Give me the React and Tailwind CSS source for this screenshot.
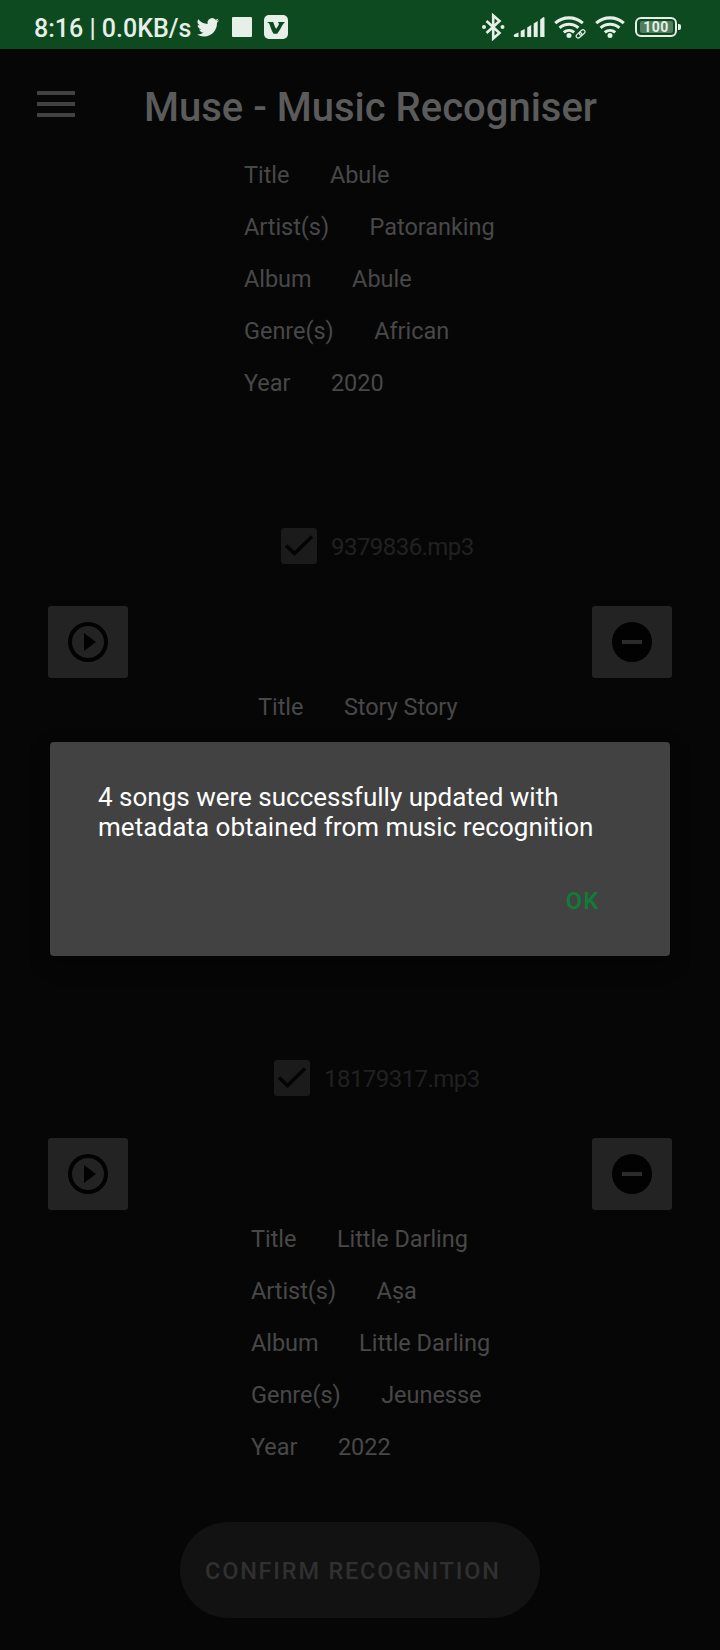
import React from "react";

const SONGS = [
  {
    id: "abule",
    infoClass: "pl-[244px]",
    rows: [
      ["Title", "Abule"],
      ["Artist(s)", "Patoranking"],
      ["Album", "Abule"],
      ["Genre(s)", "African"],
      ["Year", "2020"],
    ],
  },
  {
    id: "story",
    file: "9379836.mp3",
    fileClass: "pl-[281px]",
    infoClass: "pl-[258px]",
    rows: [["Title", "Story Story"]],
  },
  {
    id: "darling",
    file: "18179317.mp3",
    fileClass: "pl-[274px]",
    infoClass: "pl-[251px]",
    rows: [
      ["Title", "Little Darling"],
      ["Artist(s)", "Aṣa"],
      ["Album", "Little Darling"],
      ["Genre(s)", "Jeunesse"],
      ["Year", "2022"],
    ],
  },
];

function Wifi({ linked }) {
  return (
    <svg className="h-6 w-8 shrink-0" viewBox="0 0 32 24" fill="none" stroke="#e6efe8" strokeWidth="3.1">
      <path d="M1.2 8.2a20.5 20.5 0 0 1 27.6 0" />
      <path d="M5.6 12.9a14 14 0 0 1 18.8 0" />
      <path d="M9.8 17.400a8 8 0 0 1 10.400 0" />
      <circle cx="15" cy="20.600" r="2.500" fill="#e6efe8" stroke="none" />
      {linked && (
        <g>
          <circle cx="26.500" cy="19" r="5.800" fill="#0d4a20" stroke="none" />
          <g strokeWidth="1.200" transform="rotate(-42 26.500 19)">
            <rect x="21.400" y="17" width="6.200" height="4" rx="2" />
            <rect x="25.600" y="17" width="6.200" height="4" rx="2" />
          </g>
        </g>
      )}
    </svg>
  );
}

function StatusBar() {
  return (
    <div className="flex h-[49px] items-center bg-[#0d4a20] pl-[34px] pt-[5px] text-[#e6efe8]">
      <span className="w-[162px] whitespace-nowrap pt-[4px] text-[25px] font-medium leading-[30px]">8:16 | 0.0KB/s</span>
      <svg className="h-6 w-6 shrink-0" viewBox="0 0 24 24" fill="#e6efe8">
        <path d="M23.6 4.9a9.6 9.6 0 0 1-2.8.8 4.9 4.9 0 0 0 2.2-2.7c-1 .6-2 1-3.1 1.2a4.9 4.9 0 0 0-8.4 4.5A14 14 0 0 1 1.4 3.6a4.9 4.9 0 0 0 1.5 6.6 4.9 4.9 0 0 1-2.2-.6v.1a4.9 4.9 0 0 0 3.9 4.8 4.9 4.9 0 0 1-2.2.1 4.9 4.9 0 0 0 4.6 3.4A9.9 9.9 0 0 1 0 20a13.9 13.9 0 0 0 7.5 2.2c9.1 0 14-7.5 14-14v-.6a10 10 0 0 0 2.1-2.7z" transform="translate(1 .8) scale(.93)" />
      </svg>
      <span className="ml-3 h-5 w-5 rounded-[1px] bg-[#e6efe8]" />
      <svg className="ml-3 h-6 w-6 shrink-0" viewBox="0 0 24 24">
        <rect width="24" height="24" rx="5" fill="#e6efe8" />
        <path d="M3 7h6.200c.8 2.600 1.600 4.700 2.900 6.700 1.500-1.800 2.500-3.300 2.900-4.700L14 7h7c-1.800 1.600-2.700 3.200-3.900 5.600-1.100 2.300-2.500 4.500-3.900 6.100h-3.600C7.600 16 6.600 12.400 5.200 8.600z" fill="#0d4a20" />
      </svg>
      <svg className="ml-[193px] h-7 w-6 shrink-0" viewBox="0 0 24 28" fill="none" stroke="#e6efe8" strokeWidth="2.600">
        <path d="M5.500 8 18.500 20 12.200 25.500V2.500L18.500 8 5.500 20" />
        <circle cx="3" cy="14" r="2" fill="#e6efe8" stroke="none" />
        <circle cx="21.500" cy="14" r="2" fill="#e6efe8" stroke="none" />
      </svg>
      <svg className="ml-2 h-5 w-8 shrink-0" viewBox="0 0 32 20" fill="#e6efe8">
        <path d="M.8 18 2 17l3.500-1.500V20H1.800a1 1 0 0 1-1-1z" />
        <path d="M7.700 14l4-2v8h-4z" />
        <path d="M14.200 10.500l4-2.500v12h-4z" />
        <path d="M20.700 6.500l4-2.500v16h-4z" />
        <path d="M27.200 2.500l3-2.200a.8.8 0 0 1 1.300.7v19h-4.300z" />
      </svg>
      <span className="ml-[9px] flex"><Wifi linked /></span>
      <span className="ml-[9px] flex"><Wifi /></span>
      <span className="ml-2 flex h-5 w-[42px] items-center justify-center rounded-[6px] border-2 border-[#e6efe8]">
        <span className="flex h-3 w-[33px] items-center justify-center rounded-[2px] bg-[#4f7d5d] text-[14px] font-bold leading-3 tracking-[0.5px]">100</span>
      </span>
      <span className="ml-px h-[6px] w-[3px] rounded-r-[2px] bg-[#e6efe8]" />
    </div>
  );
}

function Header() {
  return (
    <header className="flex h-[100px] items-start pl-[37px]">
      <div className="mt-[42px] flex w-[38px] flex-col gap-[7px]">
        <span className="h-1 bg-[#424242]" />
        <span className="h-1 bg-[#424242]" />
        <span className="h-1 bg-[#424242]" />
      </div>
      <h1 className="ml-[69px] mt-[35px] whitespace-nowrap text-[40px] font-medium leading-[48px] text-[#5b5b5b]">
        Muse - Music Recogniser
      </h1>
    </header>
  );
}

function SongControls({ song }) {
  return (
    <>
      <label className={`flex h-9 items-center ${song.fileClass}`}>
        <span className="flex h-9 w-9 items-center justify-center rounded-[3px] bg-[#1b1b1b]">
          <svg className="h-9 w-9" viewBox="0 0 36 36" fill="none" stroke="#040404" strokeWidth="3.500">
            <path d="M5 17.500 13.500 25.500 31 8.500" />
          </svg>
        </span>
        <span className="ml-[14px] pt-[2px] text-[24px] leading-[34px] tracking-[-0.55px] text-[#212121]">{song.file}</span>
      </label>
      <div className="mt-[42px] flex h-[72px] justify-between px-12">
        <button className="flex w-20 items-center justify-center rounded-[3px] bg-[#232323]">
          <svg className="h-12 w-12" viewBox="0 0 24 24" fill="#020202">
            <path d="M12 2a10 10 0 1 0 0 20 10 10 0 0 0 0-20zm0 18a8 8 0 1 1 0-16 8 8 0 0 1 0 16z" />
            <path d="m10 16.500 6-4.500-6-4.500z" />
          </svg>
        </button>
        <button className="flex w-20 items-center justify-center rounded-[3px] bg-[#232323]">
          <svg className="h-12 w-12" viewBox="0 0 24 24">
            <circle cx="12" cy="12" r="10" fill="#020202" />
            <path d="M7 11h10v2H7z" fill="#2b2b2b" />
          </svg>
        </button>
      </div>
      <div className="h-[3px]" />
    </>
  );
}

function SongInfo({ song }) {
  return (
    <dl className={`h-[260px] text-[23.5px] leading-[52px] tracking-[-0.04px] text-[#484848] ${song.infoClass}`}>
      {song.rows.map(([label, value]) => (
        <div key={label} className="flex h-[52px] gap-[40.5px]">
          <dt>{label}</dt>
          <dd>{value}</dd>
        </div>
      ))}
    </dl>
  );
}

function Dialog() {
  return (
    <div className="absolute left-[50px] top-[742px] flex h-[214px] w-[620px] flex-col rounded-[4px] bg-[#424242] px-12 pt-[40px] shadow-[0_8px_20px_#00000060]">
      <p className="whitespace-nowrap text-[26px] leading-[30px] text-white">
        4 songs were successfully updated with
        <br />
        <span className="tracking-[0.05px]">metadata obtained from music recognition</span>
      </p>
      <button className="mr-[22px] mt-[41px] self-end text-[23.5px] font-semibold leading-[36px] tracking-[1.6px] text-[#117a36]">
        OK
      </button>
    </div>
  );
}

export default function App() {
  return (
    <div className="relative h-[1650px] w-[720px] overflow-hidden bg-[#060606] font-[Roboto,sans-serif]">
      <StatusBar />
      <Header />
      <main className="flex flex-col gap-[119px]">
        {SONGS.map((song) => (
          <section key={song.id}>
            {song.file && <SongControls song={song} />}
            <SongInfo song={song} />
          </section>
        ))}
      </main>
      <div className="mt-[49px] flex justify-center">
        <button className="h-24 w-[360px] rounded-full bg-[#121212] pl-[25px] pt-[4px] text-left text-[23.5px] font-medium tracking-[1.8px] text-[#303030]">
          CONFIRM RECOGNITION
        </button>
      </div>
      <Dialog />
    </div>
  );
}
